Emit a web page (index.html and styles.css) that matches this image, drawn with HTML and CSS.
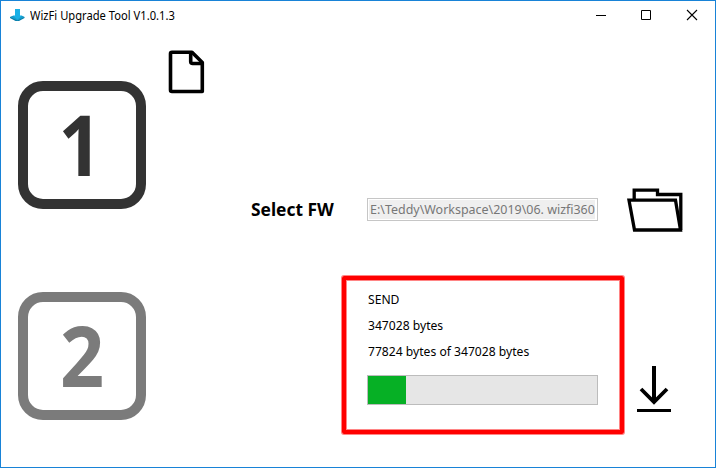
FILE: index.html
```
<!DOCTYPE html>
<html lang="en">
<head>
<meta charset="utf-8">
<title>WizFi Upgrade Tool V1.0.1.3</title>
<link rel="stylesheet" href="styles.css">
</head>
<body>
<div class="window">
  <header class="titlebar">
    <svg class="app-icon" width="15" height="14" viewBox="0 0 15 14">
      <path d="M0 8L3 7H12L14.500 8V9L9 12H5.500L0 9Z" fill="#087da9"/>
      <path d="M0 8L4 7H11L14.500 8L7.500 11.500Z" fill="#159fce"/>
      <path d="M5 0H10V6.500H12.500L7.500 10.500L2.500 6.500H5Z" fill="#18b0e6"/>
    </svg>
    <span class="title"><span class="title-text">WizFi Upgrade Tool V1.0.1.3</span></span>
    <div class="controls">
      <svg width="46" height="30" viewBox="0 0 46 30"><path d="M11 14.500H21" stroke="#000"/></svg>
      <svg width="46" height="30" viewBox="0 0 46 30"><path d="M10.500 9.500H19.500V18.500H10.500Z" fill="none" stroke="#000"/></svg>
      <svg width="46" height="30" viewBox="0 0 46 30"><path d="M10 9L20 19M20 9L10 19" stroke="#000" stroke-width="1.100"/></svg>
    </div>
  </header>
  <section class="step step-one">
    <div class="badge"><span class="digit digit-one">1</span></div>
    <svg class="file-icon" width="38" height="46" viewBox="0 0 38 46" fill="none" stroke="#000" stroke-width="3.600" stroke-linejoin="round">
      <path d="M4 2.300H24L34.300 12.500V41.500H4Q2.500 41.500 2.500 40V3.800Q2.500 2.300 4 2.300Z"/>
      <path d="M22.700 2.300V11.500Q22.700 13.500 24.700 13.500H34.300"/>
    </svg>
    <div class="label"><span class="label-text">Select FW</span></div>
    <div class="path"><div class="path-inner"><span class="path-text">E:\Teddy\Workspace\2019\06. wizfi360</span></div></div>
    <svg class="folder-icon" width="57" height="46" viewBox="0 0 57 46" fill="none" stroke="#000" stroke-width="3.300">
      <path d="M7.200 12V2.200H30.500V6.500H53.800V42"/>
      <path d="M2 12.200H48.500L53.500 42H7.500Z" fill="#fff"/>
    </svg>
  </section>
  <section class="step step-two">
    <div class="badge muted"><span class="digit">2</span></div>
    <div class="status">
      <p><span>SEND</span></p>
      <p><span>347028 bytes</span></p>
      <p><span>77824 bytes of 347028 bytes</span></p>
      <div class="progress"><div class="bar"></div></div>
    </div>
    <svg class="download-icon" width="35" height="48" viewBox="0 0 35 48" fill="none" stroke="#000">
      <path d="M17 0V36" stroke-width="4"/>
      <path d="M4 23L17 36L30 23" stroke-width="3.800"/>
      <path d="M0 44.500H34" stroke-width="3"/>
    </svg>
  </section>
</div>
</body>
</html>
```
FILE: styles.css
```
* { box-sizing: border-box; }
body {
  margin: 0;
  background: #fff;
  color: #000;
  font-family: "Noto Sans", "Open Sans", sans-serif;
}
.window {
  width: 716px;
  height: 468px;
  border: 1px solid #1883d7;
  overflow: hidden;
}
svg { display: block; flex: none; }
.titlebar {
  display: flex;
  height: 30px;
}
.app-icon { margin: 8px 0 0 9px; }
.title {
  flex: 1;
  margin-left: 5px;
  font-size: 12px;
  line-height: 29px;
  white-space: nowrap;
}
.title-text, .label-text, .path-text, .status span {
  display: inline-block;
  transform-origin: left center;
}
.title-text { transform: scaleX(.932); }
.controls { display: flex; width: 130px; }
.step { display: flex; align-items: flex-start; padding-left: 17px; }
.step-one { height: 211px; }
.badge {
  display: flex;
  flex: none;
  justify-content: center;
  align-items: center;
  width: 128px;
  height: 128px;
  margin-top: 50px;
  border: 10px solid #333;
  border-radius: 25px;
  color: #333;
  font: bold 84px/102px "Open Sans", sans-serif;
}
.digit {
  display: block;
  padding-bottom: 3px;
  transform: scaleX(.92);
}
.digit-one { padding-right: 3px; transform: scaleX(.9); }
.badge.muted { border-color: #7b7b7b; color: #7b7b7b; }
.file-icon { margin: 19px 0 0 22px; }
.label {
  width: 116px;
  margin: 165px 0 0 45px;
  font-size: 18px;
  font-weight: bold;
  line-height: 26px;
  white-space: nowrap;
}
.label-text { transform: scaleX(.965); }
.path {
  width: 231px;
  height: 23px;
  margin-top: 167px;
  padding: 1px 2px 1px 1px;
  border: 1px solid #c6c6c6;
}
.path-inner {
  height: 19px;
  padding-left: 1px;
  overflow: hidden;
  background: #efefef;
  color: #777;
  font-size: 13px;
  line-height: 19px;
  white-space: nowrap;
}
.path-text { transform: scaleX(.958); }
.folder-icon { margin: 157px 0 0 29px; }
.status {
  width: 282px;
  height: 158px;
  margin: 34px 0 0 196px;
  padding: 7px 21px 0 22px;
  border: 4px solid #f00;
  border-radius: 2px;
  box-shadow: 0 0 0 1px #ff8585, inset 0 0 0 1px #ff8585;
}
.status p {
  height: 26px;
  margin: 0;
  font-size: 12px;
  line-height: 26px;
  white-space: nowrap;
}
.status span { transform: scaleX(1.01); }
.progress {
  width: 231px;
  height: 30px;
  margin: 10px 0 0 -1px;
  border: 1px solid #bcbcbc;
  background: #e6e6e6;
}
.bar { width: 38px; height: 28px; background: #06b025; }
.download-icon { margin: 124px 0 0 13px; }
```
